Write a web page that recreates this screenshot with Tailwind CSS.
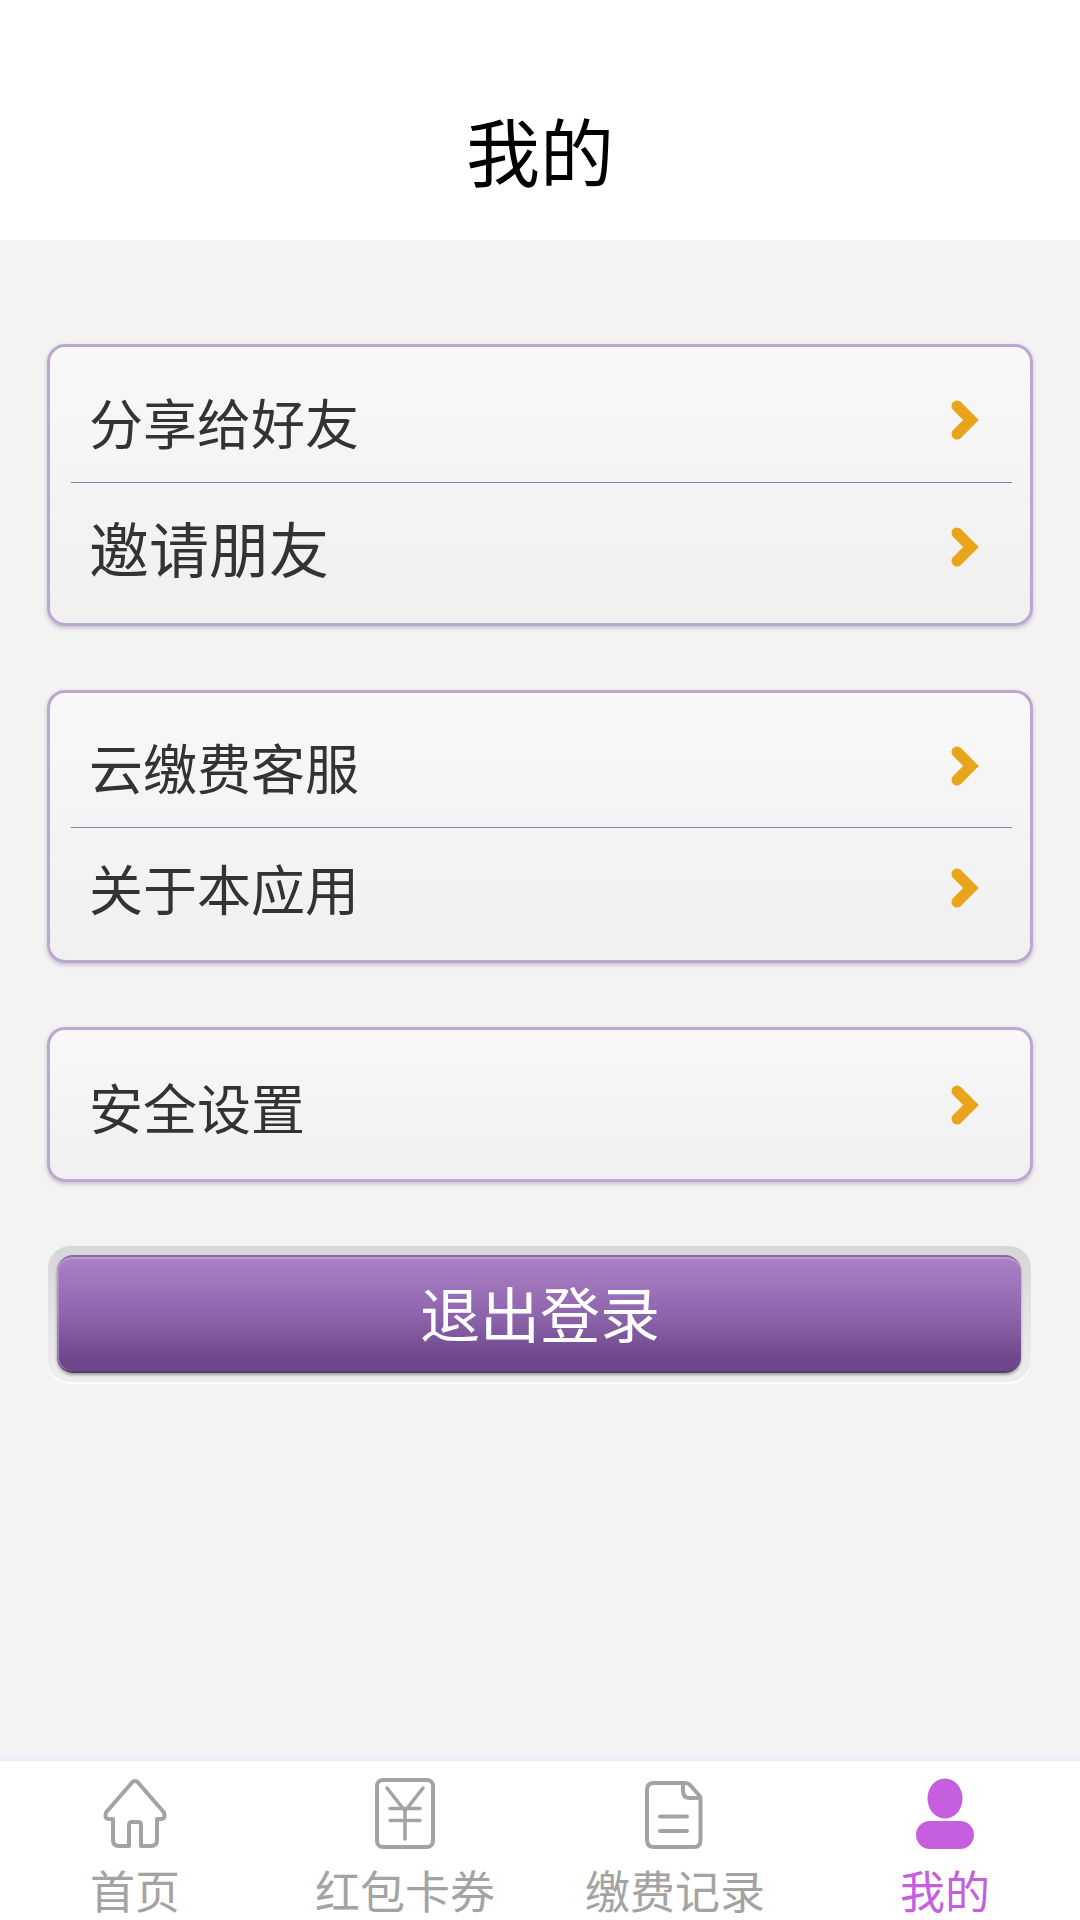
<!DOCTYPE html>
<html lang="zh">
<head>
<meta charset="utf-8">
<script src="https://cdn.jsdelivr.net/npm/@tailwindcss/browser@4"></script>
</head>
<body class="m-0">
<div class="w-[1080px] h-[1920px] flex flex-col bg-[#f3f3f3] font-['Noto_Sans_CJK_SC','Noto_Sans',sans-serif] overflow-hidden">
  <header class="h-[240px] bg-white flex items-center justify-center pt-[58px]">
    <h1 class="text-[74px] leading-[84px] text-black font-normal">我的</h1>
  </header>
  <main class="flex-1 pt-[104px] pl-[47px] pr-[47px] flex flex-col gap-[64px]">
    <section class="border-[3px] border-[#bba8d0] rounded-[18px] bg-gradient-to-b from-[#f8f8f8] to-[#f0f0f0] shadow-[0_2px_4px_rgba(90,70,110,0.3)] h-[282px] flex flex-col text-[#333333]">
      <div class="h-[135px] pl-[39px] pr-[51px] pt-[18px] flex items-center justify-between text-[54px]">
        <span class="leading-[64px] mb-[4px]">分享给好友</span>
        <svg class="w-[28px] h-[40px] mb-[7px]" viewBox="0 0 28 40" fill="none" stroke="#e8a51c" stroke-width="11" stroke-linecap="round" stroke-linejoin="miter"><polyline points="6,6 20,20 6,34"/></svg>
      </div>
      <div class="h-px ml-[21px] mr-[18px] bg-[#8f7aa8]"></div>
      <div class="flex-1 pl-[39px] pr-[51px] pb-[8px] flex items-center justify-between text-[60px]">
        <span class="leading-[70px] mb-[5px]">邀请朋友</span>
        <svg class="w-[28px] h-[40px] mb-[5px]" viewBox="0 0 28 40" fill="none" stroke="#e8a51c" stroke-width="11" stroke-linecap="round" stroke-linejoin="miter"><polyline points="6,6 20,20 6,34"/></svg>
      </div>
    </section>
    <section class="border-[3px] border-[#bba8d0] rounded-[18px] bg-gradient-to-b from-[#f8f8f8] to-[#f0f0f0] shadow-[0_2px_4px_rgba(90,70,110,0.3)] h-[273px] flex flex-col text-[#333333] text-[54px]">
      <div class="h-[134px] pl-[39px] pr-[51px] pt-[20px] flex items-center justify-between">
        <span class="leading-[64px] mb-[6px]">云缴费客服</span>
        <svg class="w-[28px] h-[40px] mb-[8px]" viewBox="0 0 28 40" fill="none" stroke="#e8a51c" stroke-width="11" stroke-linecap="round" stroke-linejoin="miter"><polyline points="6,6 20,20 6,34"/></svg>
      </div>
      <div class="h-px ml-[21px] mr-[18px] bg-[#8f7aa8]"></div>
      <div class="flex-1 pl-[39px] pr-[51px] pb-[8px] flex items-center justify-between">
        <span class="leading-[64px] mb-[5px]">关于本应用</span>
        <svg class="w-[28px] h-[40px] mb-[4px]" viewBox="0 0 28 40" fill="none" stroke="#e8a51c" stroke-width="11" stroke-linecap="round" stroke-linejoin="miter"><polyline points="6,6 20,20 6,34"/></svg>
      </div>
    </section>
    <section class="border-[3px] border-[#bba8d0] rounded-[18px] bg-gradient-to-b from-[#f8f8f8] to-[#f0f0f0] shadow-[0_2px_4px_rgba(90,70,110,0.3)] h-[155px] pl-[39px] pr-[51px] pt-[10px] flex items-center justify-between text-[#333333] text-[54px]">
      <span class="leading-[64px] mb-[6px]">安全设置</span>
      <svg class="w-[28px] h-[40px] mb-[9px]" viewBox="0 0 28 40" fill="none" stroke="#e8a51c" stroke-width="11" stroke-linecap="round" stroke-linejoin="miter"><polyline points="6,6 20,20 6,34"/></svg>
    </section>
    <div class="h-[136px] ml-[1px] mr-[2px] rounded-[22px] bg-gradient-to-b from-[#d6d6d6] via-[#e3e3e3] to-[#eeeeee] pt-[9px] pb-[9px] pl-[9px] pr-[10px] shadow-[0_2px_1px_#ffffff]">
      <button class="w-full h-full rounded-[16px] bg-gradient-to-b from-[#ab82c6] via-[#8f66ad] via-50% to-[#6d4789] to-90% border-t-[2px] border-t-[#8c6aa3] border-b-[2px] border-b-[#56406a] shadow-[inset_0_2px_0_#bb9ad3,inset_2px_0_0_rgba(200,170,220,0.5),0_2px_3px_rgba(0,0,0,0.35)] text-white text-[60px] leading-[70px] pb-[5px] pl-[2px]">退出登录</button>
    </div>
  </main>
  <div class="h-[8px] bg-gradient-to-b from-[#f3f3f3] to-[#efecf9]"></div>
  <nav class="h-[159px] bg-white pb-[4px]">
    <div class="h-[155px] overflow-hidden grid grid-cols-4 text-[45px] leading-[45px] text-[#a3a3a3]">
      <div class="flex flex-col items-center pt-[17px]">
        <svg class="w-[80px] h-[74px]" viewBox="0 0 80 74" fill="none" stroke="#a3a3a3" stroke-width="4" stroke-linejoin="round"><path d="M18 41H14Q9 41 11 34.500L37 4.500Q40 1.500 43 4.500L69 34.500Q71 41 66 41H62V62Q62 68 56 68H46V47Q46 44 43 44H37Q34 44 34 47V68H24Q18 68 18 62Z"/></svg>
        <span class="mt-[15px]">首页</span>
      </div>
      <div class="flex flex-col items-center pt-[17px]">
        <svg class="w-[80px] h-[74px]" viewBox="0 0 80 74" fill="none" stroke="#a3a3a3" stroke-linecap="round"><rect x="12" y="2" width="56" height="67" rx="6" stroke-width="4"/><path d="M22 10L40 33L58 10M40 33V61M25 30.5H55M25 42.5H55" stroke-width="3.500"/></svg>
        <span class="mt-[15px]">红包卡券</span>
      </div>
      <div class="flex flex-col items-center pt-[17px]">
        <svg class="w-[80px] h-[74px]" viewBox="0 0 80 74" fill="none" stroke="#a3a3a3" stroke-width="4" stroke-linecap="round" stroke-linejoin="round"><path d="M19 5H50Q53 5 55 7L63 16Q65.500 18 65.500 21V62Q65.500 69 59 69H19Q12 69 12 62V12Q12 5 19 5Z"/><path d="M48 6V13Q48 20 55 20H65"/><path d="M25 38.500H52M25 53H52"/></svg>
        <span class="mt-[15px]">缴费记录</span>
      </div>
      <div class="flex flex-col items-center pt-[17px] text-[#c65fdf]">
        <svg class="w-[80px] h-[74px]" viewBox="0 0 80 74" fill="#c65fdf"><ellipse cx="40" cy="20.500" rx="17.500" ry="20"/><rect x="11" y="43" width="58" height="28" rx="14"/></svg>
        <span class="mt-[15px]">我的</span>
      </div>
    </div>
  </nav>
</div>
</body>
</html>
